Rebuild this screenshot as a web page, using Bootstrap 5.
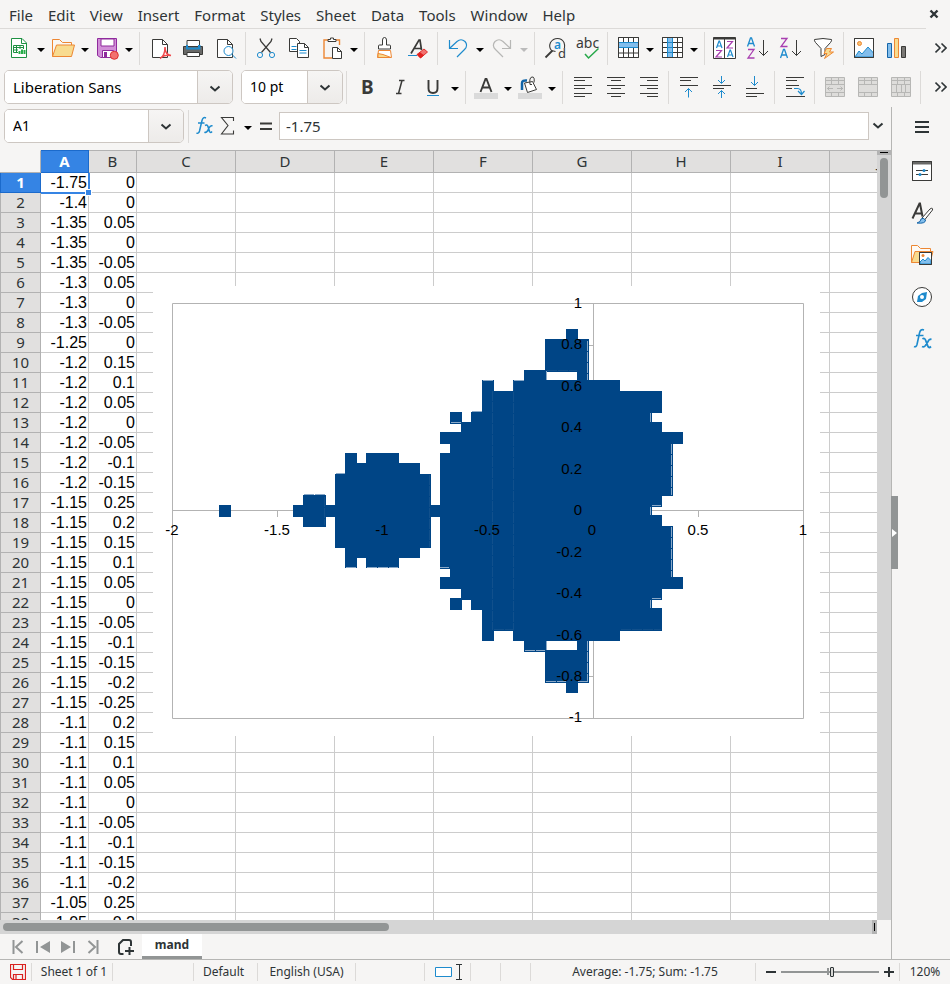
<!DOCTYPE html>
<html lang="en">
<head>
<meta charset="utf-8">
<meta name="viewport" content="width=device-width, initial-scale=1">
<title>mand - Spreadsheet</title>
<link href="https://cdn.jsdelivr.net/npm/bootstrap@5.3.0/dist/css/bootstrap.min.css" rel="stylesheet">
<style>
:root{--ui:#f6f5f4;--ink:#2e3436;--line:#b6b6b4;--soft:#dcdad8;--grid:#cccccc;--accent:#3584e4;--thumb:#929595}
body{font-family:"Noto Sans","Open Sans",sans-serif;font-size:14px;line-height:20px;color:var(--ink);background:var(--ui)}
button{color:inherit;font:inherit}
.menus{height:29px;padding-left:2px;gap:1px}
.menus::after{content:"";position:absolute;left:0;right:24px;bottom:0;border-bottom:1px solid var(--soft)}
.menus a{color:var(--ink);font-size:15px;padding:0 7px}
.tool-row{height:39px;padding-left:2px;padding-bottom:1px}
.tool{width:33px;height:34px;border:0;background:none;padding:0;display:flex;align-items:center;justify-content:center;flex:none}
.more{width:18px}
.drop{width:11px;height:34px;border:0;background:none;padding:0;flex:none;display:flex;align-items:center;justify-content:center}
.drop::after{content:"";border:4px solid transparent;border-top-color:#000;border-bottom:0;margin-top:3px}
.drop:disabled::after{border-top-color:#bbb}
.split{width:1px;height:33px;background:var(--soft);margin:0 3px;flex:none}
.drop+.split{margin-left:5px}
.ico{width:24px;height:24px;fill:none;stroke:#3a3a38;flex:none;overflow:visible}
.ico text{stroke:none;font-family:"Noto Sans",sans-serif}
.ico.undo{stroke:#1e8bcd}.ico.faded{stroke:#b7b7b5}
.combo{height:34px;border:1px solid #cdc7c2;border-radius:5px;overflow:hidden;background:#fff;flex:none;display:flex}
.combo input{border:0;padding:0 8px;min-width:0;flex:1;color:#000;outline:0}
.combo button{width:35px;border:0;border-left:1px solid #cdc7c2;background:linear-gradient(#f6f5f4,#edebe9);padding:0}
.w-font{width:229px;font-size:15px}.w-size{width:102px}.w-name{width:180px}
.formula-bar{height:43px;padding-left:4px;padding-bottom:5px}
.formula-bar .entry{height:28px;border:1px solid #cdc7c2;padding:0 6px;min-width:0;color:var(--ink);background:#fff;outline:0;font-size:15px}
.mini{border:0;background:none;padding:0;flex:none;height:30px;display:flex;align-items:center;justify-content:center}
.w-22{width:22px}.w-26{width:26px}.w-20{width:20px}
.grid-area{overflow:hidden;background:#fff}
.cells{table-layout:fixed;border-collapse:separate;border-spacing:0;width:929px}
.c-head{width:41px}.c-slim{width:48px}.c-wide{width:99px}
.cells th,.cells td{height:20px;line-height:19px;padding:0;border-right:1px solid var(--grid);border-bottom:1px solid var(--grid);white-space:nowrap}
.cells td{font-family:"Liberation Sans",Arial,sans-serif;font-size:16px;color:#000;text-align:right;padding-right:1px}
.cells th{background:#e1e0df;font-weight:400;font-size:15px;text-align:center;border-color:#b2b2b2}
.cells thead th{height:23px;line-height:21px;border-top:1px solid #b2b2b2}
.cells thead th:first-child{background:var(--ui);border-top-color:var(--ui)}
.cells tbody th{border-left:1px solid #b2b2b2}
.cells th.picked{background:var(--accent);color:#fff;font-weight:700;border-color:#1b6acb}
.cells td.cursor{position:relative}
.cells td.cursor::before{content:"";position:absolute;left:0;right:-2px;top:0;bottom:-2px;border:solid var(--accent);border-width:0 2px 2px 0}
.cells td.cursor::after{content:"";position:absolute;right:-4px;bottom:-4px;width:7px;height:7px;background:var(--accent);border:1px solid #fff}
.chart{position:absolute;left:153px;top:136px;width:667px;height:450px;background:#fff}
.chart text{font-family:"Liberation Sans",Arial,sans-serif;font-size:15px;fill:#000}
.vbar{width:14px;background:#d5d5d5}
.vbar .grip{height:5px;background:#b3b3b3}
.vbar .grip i{display:block;width:8px;height:1px;background:#000}
.vbar .thumb{width:8px;height:40px;border-radius:4px;background:var(--thumb);margin-top:3px}
.hbar{height:14px;background:#d5d5d5;margin-right:14px}
.hbar .thumb{width:44%;height:8px;border-radius:4px;background:var(--thumb);margin-left:3px}
.hbar .grip{width:5px;height:14px;background:#b3b3b3}
.hbar .grip i{display:block;width:1px;height:8px;background:#000}
.sheet-tabs{height:26px;border-bottom:1px solid var(--line);padding-left:5px}
.sheet-tabs .mini{width:25px;height:25px}
.sheet-tabs .tab{border:0;border-bottom:3px solid var(--thumb);background:#fff;width:60px;font-weight:700;font-size:12px;padding:0;line-height:22px}
.deck{width:59px;border-left:1px solid var(--line);border-bottom:1px solid var(--line);position:relative;padding:5px 0 0 1px}
.deck .mini{width:42px;height:30px}
.deck .stack{gap:12px;margin-top:14px}
.fold{position:absolute;left:-1px;top:389px;width:7px;height:73px;border:0;background:#929595;padding:0}
.fold::after{content:"";display:block;border:4px solid transparent;border-left:5px solid #fff;border-right:0;margin-left:1px}
.status{height:24px;font-size:12px;white-space:nowrap}
.status>div{height:18px;line-height:18px;border-right:1px solid var(--soft);flex:none;display:flex;align-items:center;justify-content:center}
.status>div:last-child{border:0}
.s-32{width:32px}.s-81{width:81px}.s-64{width:64px}.s-98{width:98px}.s-69{width:69px}.s-46{width:46px}.s-30{width:30px}.s-144{width:144px}.s-50{width:50px}
.zoomer{-webkit-appearance:none;appearance:none;width:98px;height:18px;background:linear-gradient(#929595,#929595) 46px 5px/2px 7px no-repeat,linear-gradient(#929595,#929595) center/100% 2px no-repeat;margin:0 5px}
.zoomer::-webkit-slider-thumb{-webkit-appearance:none;width:4px;height:10px;background:#d8d8d6;border:1px solid #2e3436;border-radius:1px}
</style>
<script src="https://cdn.jsdelivr.net/npm/bootstrap@5.3.0/dist/js/bootstrap.bundle.min.js"></script>
</head>
<body class="vh-100 d-flex flex-column overflow-hidden">

<nav class="menus d-flex align-items-center position-relative flex-shrink-0" aria-label="Menu bar">
  <a class="text-decoration-none" href="#">File</a><a class="text-decoration-none" href="#">Edit</a><a class="text-decoration-none" href="#">View</a><a class="text-decoration-none" href="#">Insert</a><a class="text-decoration-none" href="#">Format</a><a class="text-decoration-none" href="#">Styles</a><a class="text-decoration-none" href="#">Sheet</a><a class="text-decoration-none" href="#">Data</a><a class="text-decoration-none" href="#">Tools</a><a class="text-decoration-none" href="#">Window</a><a class="text-decoration-none" href="#">Help</a>
  <button class="mini ms-auto me-2" aria-label="Close"><svg width="16" height="16" viewBox="0 0 16 16" stroke="#2e3436" stroke-width="2.4"><path d="M4.500 3.500l7 7M11.500 3.500l-7 7"/></svg></button>
</nav>

<div class="tool-row d-flex align-items-center flex-shrink-0" role="toolbar" aria-label="Standard">
  <button class="tool" aria-label="New"><svg class="ico" viewBox="0 0 24 24"><path d="M4.500 2.500h10.500l4.500 4.500v14.500h-15z" fill="#fff" stroke="#1e9142"/><path d="M14.500 2.500v5h5" stroke="#1e9142"/><path d="M6.500 9.500h10v7h-10zM6.500 11.500h10M6.500 14h10M9.500 9.500v7M13 9.500v7" stroke="#1e9142"/><path d="M11 13h8v5h-8z" fill="#fff" stroke="none"/><path d="M12.500 18v-3M15 18v-4.500M17.500 18v-4" stroke="#27ae4a" stroke-width="2"/></svg></button><button class="drop" aria-label="New options"></button>
  <button class="tool" aria-label="Open"><svg class="ico" viewBox="0 0 24 24"><path d="M1.500 20.500v-17h7l3 3h9v4" fill="#faf7f3" stroke="#ed8733"/><path d="M1.500 20.500l4-11.500h18l-3 11.500z" fill="#f8db8f" stroke="#ed8733"/></svg></button><button class="drop" aria-label="Open options"></button>
  <button class="tool" aria-label="Save"><svg class="ico" viewBox="0 0 24 24"><path d="M2.500 2.500h19v19h-16l-3-2z" fill="#d28fd8" stroke="#8f2a9c"/><path d="M6 3h13v7h-13zM7.500 14.500h11v7h-11z" fill="#fff" stroke="#8f2a9c"/><path d="M9 16h3v5h-3z" fill="#8f2a9c" stroke="none"/><circle cx="19.300" cy="19.300" r="4" fill="#f2716f" stroke="#e0302f"/></svg></button><button class="drop" aria-label="Save options"></button>
  <div class="split"></div>
  <button class="tool" aria-label="Export as PDF"><svg class="ico" viewBox="0 0 24 24"><path d="M4.500 3.500h10l5 5v13h-15z" fill="#fff"/><path d="M14.500 3.500v5h5"/><path d="M12 22.500c3-1.500 5-6 5-11.500 0 5 2 8 6 8.500-5-1-8 .5-10 2" stroke="#f04a4c" stroke-width="1.500"/></svg></button>
  <button class="tool" aria-label="Print"><svg class="ico" viewBox="0 0 24 24"><path d="M6 10v-5.500h12.500v5.500" fill="#fff"/><path d="M2.500 10.500h19v8h-19z" fill="#696967"/><path d="M5 9h2v2.500h10v-2.500h2.500v4.500h-14.500z" fill="#1e8bcd" stroke="none"/><path d="M6 16.500h12.500v4h-12.500z" fill="#fff"/></svg></button>
  <button class="tool" aria-label="Print preview"><svg class="ico" viewBox="0 0 24 24"><path d="M3.500 3.500h10l5 5v13h-15z" fill="#fff"/><path d="M13.500 3.500v5h5"/><circle cx="14.500" cy="15" r="4.500" fill="#fff" stroke="#1e8bcd"/><path d="M18 18.500l4 4" stroke="#1e8bcd"/></svg></button>
  <div class="split"></div>
  <button class="tool" aria-label="Cut"><svg class="ico" viewBox="0 0 24 24"><path d="M6 2.500l1 3 9.500 11M18 2.500l-1 3-9.500 11" stroke-width="1.300"/><circle cx="6" cy="19" r="2.600" stroke="#1e8bcd"/><circle cx="18" cy="19" r="2.600" stroke="#1e8bcd"/></svg></button>
  <button class="tool" aria-label="Copy"><svg class="ico" viewBox="0 0 24 24"><path d="M2.500 2.500h7l3 3v10h-10z" fill="#fff"/><path d="M4.500 10.500h5M4.500 13.500h5" stroke="#1e8bcd"/><path d="M10.500 7.500h7l4 4v10h-11z" fill="#fff"/><path d="M17.500 7.500v4h4"/><path d="M12.500 14.500h7M12.500 17h7" stroke="#1e8bcd"/></svg></button>
  <button class="tool" aria-label="Paste"><svg class="ico" viewBox="0 0 24 24"><path d="M8 4h-4v18h8M16 4h3.500v5" stroke="#ed8733" stroke-width="1.400"/><path d="M8 5.500h8v-2h-2.500v-1.500h-3v1.500h-2.500z" fill="#fff"/><path d="M12.500 11.500h5l4 4v7h-9z" fill="#fff"/><path d="M17.500 11.500v4h4"/></svg></button><button class="drop" aria-label="Paste options"></button>
  <div class="split"></div>
  <button class="tool" aria-label="Clone formatting"><svg class="ico" viewBox="0 0 24 24"><path d="M5.500 13v-3q0-1 1-1h3v-5q0-2.500 2-2.500t2 2.500v5h3q1 0 1 1v3z" fill="#fff"/><path d="M5.500 14.500h12l1 7h-14z" fill="#fff" stroke="#ed8733"/><path d="M5 21.500v-4l5 1 8 3z" fill="#f8db8f" stroke="#ed8733"/></svg></button>
  <button class="tool" aria-label="Clear formatting"><svg class="ico" viewBox="0 0 24 24"><path d="M5 17.500l8-13.500h1l1.500 10M8 12.500h7" stroke-width="1.700"/><path d="M2 19.500h9" stroke="#1e8bcd"/><path d="M11 18.500l7-5.500 3.500 3-7 6z" fill="#f2716f" stroke="#e0302f"/><path d="M11 18.500l3-2.300 4 3-3.500 3z" fill="#e0201f" stroke="none"/></svg></button>
  <div class="split"></div>
  <button class="tool" aria-label="Undo"><svg class="ico undo" viewBox="0 0 24 24"><path d="M3.500 4v8.500h8.500M4 12l7-6.500q4-3.500 8 0 3.500 4-.5 8l-7.500 7.500" stroke-width="1.200"/></svg></button><button class="drop" aria-label="Undo list"></button>
  <button class="tool" disabled aria-label="Redo"><svg class="ico faded" viewBox="0 0 24 24"><path d="M20.500 4v8.500h-8.500M20 12l-7-6.500q-4-3.500-8 0-3.500 4 .5 8l7.500 7.500" stroke-width="1.200"/></svg></button><button class="drop" disabled aria-label="Redo list"></button>
  <div class="split"></div>
  <button class="tool" aria-label="Find and replace"><svg class="ico" viewBox="0 0 24 24"><path d="M8.500 14.500q-3-3.500-1-8 2.500-4 7-4t6.500 4q1 2.500.5 5.500M8.500 14.500l4 1" stroke-width="1.100"/><path d="M2.500 21.500l7-7" stroke-width="1.800"/><text x="11" y="13" font-size="12" fill="#1e8bcd" font-weight="600">a</text><text x="15" y="22" font-size="13" fill="#3a3a38">d</text></svg></button>
  <button class="tool" aria-label="Spelling"><svg class="ico" viewBox="0 0 24 24"><text x="0" y="12" font-size="14" fill="#3a3a38">abc</text><path d="M9 18l3.500 4 10-9.500" stroke="#27a84a" stroke-width="1.500"/></svg></button>
  <div class="split"></div>
  <button class="tool" aria-label="Row"><svg class="ico" viewBox="0 0 24 24"><path d="M2.500 1.500h20v20h-20z" fill="#fff"/><path d="M2.500 17h20M7.500 1.500v20M12.500 1.500v20M17.500 1.500v20"/><path d="M2.500 6.500h20v5h-20z" fill="#83beec" stroke="#1e8bcd"/><path d="M2.500 1.500h20v20h-20z"/></svg></button><button class="drop" aria-label="Row options"></button>
  <button class="tool" aria-label="Column"><svg class="ico" viewBox="0 0 24 24"><path d="M2.500 1.500h20v20h-20z" fill="#fff"/><path d="M17.500 1.500v20M2.500 6.500h20M2.500 11.500h20M2.500 16.500h20"/><path d="M7.500 1.500h5v20h-5z" fill="#83beec" stroke="#1e8bcd"/><path d="M7.500 6.500h5M7.500 11.500h5M7.500 16.500h5" stroke="#1e8bcd"/><path d="M2.500 1.500h20v20h-20z"/></svg></button><button class="drop" aria-label="Column options"></button>
  <div class="split"></div>
  <button class="tool" aria-label="Sort"><svg class="ico" viewBox="0 0 24 24"><path d="M.5 1.500h22v21h-22z" fill="#fff"/><path d="M.5 2.500h22" stroke-width="2"/><path d="M11.500 3v19"/><path d="M3.500 12l2.500-7h.5l2.500 7M4.500 10h4M14.500 21l2.500-7h.5l2.500 7M15.500 19h4" stroke="#1e8bcd" stroke-width="1.200"/><path d="M14 5.500h5.500l-5.500 6.500h6M3 14.500h5.500l-5.500 6.500h6" stroke="#a83fb0" stroke-width="1.200"/></svg></button>
  <button class="tool" aria-label="Sort ascending"><svg class="ico" viewBox="0 0 24 24"><path d="M1.500 10.500l3-8.500h1l3 8.500M2.500 7.500h5" stroke="#1e8bcd" stroke-width="1.300"/><path d="M2 13.500h6l-6 8.500h6.500" stroke="#a83fb0" stroke-width="1.300"/><path d="M17.500 4v15.500M13 15l4.500 4.500 4.500-4.500"/></svg></button>
  <button class="tool" aria-label="Sort descending"><svg class="ico" viewBox="0 0 24 24"><path d="M2 2.500h6l-6 8h6.500" stroke="#a83fb0" stroke-width="1.300"/><path d="M1.500 22l3-8.500h1l3 8.500M2.500 19h5" stroke="#1e8bcd" stroke-width="1.300"/><path d="M17.500 4v15.500M13 15l4.500 4.500 4.500-4.500"/></svg></button>
  <button class="tool" aria-label="AutoFilter"><svg class="ico" viewBox="0 0 24 24"><path d="M2.500 3.500q8.500-2 17 0 .5 1-1 3l-5.500 6v6l-4 2v-8l-5.500-6q-1.500-2-1-3z" fill="#fff"/><path d="M14.500 12.500h5l-2 3.500h4l-9 6.500 2.500-5h-3z" fill="#f8db8f" stroke="#ed8733"/></svg></button>
  <div class="split"></div>
  <button class="tool" aria-label="Insert image"><svg class="ico" viewBox="0 0 24 24"><path d="M2.500 2.500h19v19h-19z" fill="#fff"/><circle cx="7.500" cy="7.500" r="2" fill="#f8c26f" stroke="#ed8733"/><path d="M3 21l4-6 3 3 6-7 5.500 6v4z" fill="#83beec" stroke="#1e8bcd"/><path d="M2.500 2.500h19v19h-19z"/></svg></button>
  <button class="tool" aria-label="Insert chart"><svg class="ico" viewBox="0 0 24 24"><path d="M2.500 7.500h4v14h-4z" fill="#83beec" stroke="#1565a8"/><path d="M9.500 2.500h4v19h-4z" fill="#f8db8f" stroke="#ed8733"/><path d="M16.500 10.500h4v11h-4z" fill="#797774"/></svg></button>
  <button class="tool more ms-auto" aria-label="More tools"><svg width="12" height="12" viewBox="0 0 12 12" fill="none" stroke="#2e3436" stroke-width="1.600"><path d="M.5 1.500l4.500 4.500-4.500 4.500M6.500 1.500l4.500 4.500-4.500 4.500"/></svg></button>
</div>

<div class="tool-row d-flex align-items-center flex-shrink-0 ps-1" role="toolbar" aria-label="Formatting">
  <div class="combo w-font"><input aria-label="Font name" value="Liberation Sans"><button aria-label="Font list"><svg width="12" height="8" viewBox="0 0 12 8" fill="none" stroke="#2e3436" stroke-width="2"><path d="M1.500 1.500l4.500 4 4.500-4"/></svg></button></div>
  <div class="combo w-size ms-2"><input aria-label="Font size" value="10 pt"><button aria-label="Size list"><svg width="12" height="8" viewBox="0 0 12 8" fill="none" stroke="#2e3436" stroke-width="2"><path d="M1.500 1.500l4.500 4 4.500-4"/></svg></button></div>
  <div class="split"></div>
  <button class="tool" aria-label="Bold"><svg class="ico" viewBox="0 0 24 24"><text x="6" y="19" font-size="19" font-weight="700" fill="#3a3a38">B</text></svg></button>
  <button class="tool" aria-label="Italic"><svg class="ico" viewBox="0 0 24 24"><path d="M11 5.500h5.500M8 18.500h5.500M14 5.500l-3.500 13" stroke-width="1.500"/></svg></button>
  <button class="tool" aria-label="Underline"><svg class="ico" viewBox="0 0 24 24"><path d="M7.500 5v8.500q0 4.500 4.500 4.500t4.500-4.500v-8.500" stroke-width="1.900"/><path d="M6 20.500h12" stroke="#1e8bcd"/></svg></button><button class="drop" aria-label="Underline styles"></button>
  <div class="split"></div>
  <button class="tool" aria-label="Font color"><svg class="ico" viewBox="0 0 24 24"><path d="M0 18h24v6h-24z" fill="#dadada" stroke="none"/><path d="M6.500 17l5-13h1l5 13M8.500 12.500h7" stroke-width="1.900"/></svg></button><button class="drop" aria-label="Font colors"></button>
  <button class="tool" aria-label="Background color"><svg class="ico" viewBox="0 0 24 24"><path d="M0 18h24v6h-24z" fill="#dadada" stroke="none"/><path d="M4 15v-7q0-3 5-2.500" stroke="#0f64a8" stroke-width="2.500"/><path d="M6.500 8l8-1.500 4 8-9 3z" fill="#fff"/><path d="M12 9.500q-1-7 2-7.500t2 5.500M12 9.500h2"/></svg></button><button class="drop" aria-label="Background colors"></button>
  <div class="split"></div>
  <button class="tool" aria-label="Align left"><svg class="ico" viewBox="0 0 24 24"><path d="M3 2.500h18M3 5.500h11M3 10.500h18M3 13.500h11M3 18.500h18M3 21.500h11"/></svg></button>
  <button class="tool" aria-label="Align center"><svg class="ico" viewBox="0 0 24 24"><path d="M3 2.500h18M7 5.500h10M3 10.500h18M7 13.500h10M3 18.500h18M7 21.500h10"/></svg></button>
  <button class="tool" aria-label="Align right"><svg class="ico" viewBox="0 0 24 24"><path d="M3 2.500h18M10 5.500h11M3 10.500h18M10 13.500h11M3 18.500h18M10 21.500h11"/></svg></button>
  <div class="split"></div>
  <button class="tool" aria-label="Align top"><svg class="ico" viewBox="0 0 24 24"><path d="M3 2.500h18M3 5.500h11M3 10.500h18"/><path d="M11.500 22.500v-9M8 17l3.500-3.500 3.500 3.500" stroke="#1e8bcd"/></svg></button>
  <button class="tool" aria-label="Center vertically"><svg class="ico" viewBox="0 0 24 24"><path d="M3 10.500h18M3 13.500h11"/><path d="M11.500 1v7M8 5l3.500 3.500 3.500-3.500M11.500 23v-7.500M8 19l3.500-3.500 3.500 3.500" stroke="#1e8bcd"/></svg></button>
  <button class="tool" aria-label="Align bottom"><svg class="ico" viewBox="0 0 24 24"><path d="M3 13.500h11M3 18.500h18M3 21.500h11"/><path d="M11.500 1v9.500M8 7l3.500 3.500 3.500-3.500" stroke="#1e8bcd"/></svg></button>
  <div class="split"></div>
  <button class="tool" aria-label="Wrap text"><svg class="ico" viewBox="0 0 24 24"><path d="M3 2.500h18M3 5.500h11M3 10.500h13M3 13.500h6M3 21.500h19"/><path d="M11 13.500h3.500q4 0 4 5.500M15 16l3.500 3.500 3-3.500" stroke="#1e8bcd" stroke-width="1.200"/></svg></button>
  <div class="split"></div>
  <button class="tool" disabled aria-label="Merge and center"><svg class="ico faded" viewBox="0 0 24 24"><path d="M2.500 2.500h19v19h-19z" fill="#dedddb"/><path d="M2.500 5.500h19M2.500 9.500h19M2.500 17.500h19M8.500 2.500v7M15.500 2.500v7M8.500 17.500v4M15.500 17.500v4M4 13.500h6M14 13.500h6M6.500 11.500l-2 2 2 2M17.500 11.500l2 2-2 2"/></svg></button>
  <button class="tool" disabled aria-label="Merge cells"><svg class="ico faded" viewBox="0 0 24 24"><path d="M2.500 2.500h19v19h-19z" fill="#dedddb"/><path d="M2.500 5.500h19M2.500 9.500h19M2.500 17.500h19M8.500 2.500v7M15.500 2.500v7M8.500 17.500v4M15.500 17.500v4"/></svg></button>
  <button class="tool" disabled aria-label="Split cells"><svg class="ico faded" viewBox="0 0 24 24"><path d="M2.500 2.500h19v19h-19z" fill="#dedddb"/><path d="M2.500 5.500h19M2.500 9.500h19M2.500 17.500h19M8.500 2.500v7M15.500 2.500v7M7.500 9.500v8M12.500 9.500v8M16.500 9.500v8M8.500 17.500v4M15.500 17.500v4"/></svg></button>
  <div class="split"></div>
  <button class="tool more ms-auto" aria-label="More formatting"><svg width="12" height="12" viewBox="0 0 12 12" fill="none" stroke="#2e3436" stroke-width="1.600"><path d="M.5 1.500l4.500 4.500-4.500 4.500M6.500 1.500l4.500 4.500-4.500 4.500"/></svg></button>
</div>

<div class="d-flex flex-grow-1 overflow-hidden">
  <main class="d-flex flex-column flex-grow-1 overflow-hidden">
    <div class="formula-bar d-flex align-items-center flex-shrink-0">
      <div class="combo w-name"><input aria-label="Name box" value="A1"><button aria-label="Name list"><svg width="12" height="8" viewBox="0 0 12 8" fill="none" stroke="#2e3436" stroke-width="2"><path d="M1.500 1.500l4.500 4 4.500-4"/></svg></button></div>
      <div class="split ms-1"></div>
      <button class="mini w-26" aria-label="Function wizard"><svg class="ico" viewBox="0 0 24 24"><path d="M13 4q-3-1.500-4 2.500l-2.500 10.500q-.8 3-3 2M5 9h6.500" stroke="#1e8bcd" stroke-width="1.500"/><path d="M12 11.500q2-1.500 3 1l1.500 5q1 2 2.500 0M19.500 12q-2-1-3.500 2l-1.500 3q-1.500 2-3 1" stroke="#1e8bcd" stroke-width="1.600"/></svg></button>
      <button class="mini w-20" aria-label="Select function"><svg class="ico" viewBox="0 0 24 24"><path d="M17.500 7v-3.500h-12l6.500 8-6.500 8.500h12v-3.500" stroke-width="1.100"/></svg></button>
      <button class="drop ms-1" aria-label="Functions"></button>
      <button class="mini w-26" aria-label="Formula"><svg class="ico" viewBox="0 0 24 24"><path d="M6 9.500h12M6 15h12" stroke-width="2"/></svg></button>
      <input class="entry flex-grow-1" aria-label="Input line" value="-1.75">
      <button class="mini w-22 pe-1" aria-label="Expand formula bar"><svg width="12" height="8" viewBox="0 0 12 8" fill="none" stroke="#2e3436" stroke-width="2"><path d="M1.500 1.500l4.500 4 4.500-4"/></svg></button>
    </div>

    <div class="d-flex flex-grow-1 overflow-hidden">
      <div class="grid-area flex-grow-1 position-relative">
        <table class="cells">
          <colgroup><col class="c-head"><col span="2" class="c-slim"><col span="8" class="c-wide"></colgroup>
          <thead><tr><th></th><th class="picked">A</th><th>B</th><th>C</th><th>D</th><th>E</th><th>F</th><th>G</th><th>H</th><th>I</th><th>J</th></tr></thead>
          <tbody id="rows"></tbody>
        </table>
        <svg class="chart" viewBox="153 286 667 450" role="img" aria-label="Scatter chart">
          <g fill="none" stroke="#b3b3b3">
            <path d="M172.500 303.500h631v415h-631zM172.500 510.500h631M593.500 303.500v415"/>
            <path d="M277.500 510v7M698.500 510v7M803.500 510v7M588 345.500h5M588 676.500h5"/>
          </g>
          <g fill="#004586">
            <path d="M219 505h12v12h-12zM450 412h12v12h-12zM450 598h12v12h-12z"/>
            <path d="M293 505h10v-10h23v10h9v-31h10v-21h12v10h9v-10h33v10h21v11h11v31h9v-52h10v-9h-10v-12h21v-10h10v-10h11v-32h12v11h19v-11h11v-10h21v-31h21v-10h12v10h11v41h31v11h42v22h-10v9h10v10h21v12h-10v52h-11v11h-10v8h10v11h11v51h10v12h-21v11h-10v8h10v23h-42v10h-31v42h-11v10h-12v-10h-21v-31h-21v-11h-11v-10h-19v10h-12v-31h-11v-10h-10v-11h-21v-12h10v-8h-10v-52h-9v31h-11v10h-21v10h-33v-10h-9v10h-12v-20h-10v-31h-9v10h-23v-10h-10z"/>
          </g>
          <path d="M547 372h30v8h-30zM547 641h30v9h-30z" fill="#fff"/>
          <g fill="none" stroke="#8aa9c8" stroke-dasharray="10 1">
            <path d="M587.500 341v39M587.500 641v41M671.500 444v51M671.500 527v50M546.500 371v9M546.500 641v9M650.500 413v9M650.500 507v8M650.500 600v8M652 505.500h9M652 598.500h9M525 650.500h20M546 681.500h20M578 681.500h10M451 422.500h10M304 494.500h21M336 473.500h9M483 380.500h10M514 380.500h10M472 411.500h10M346 567.500h10M367 567.500h31M440 567.500h9"/>
          </g>
          <path d="M492.500 391v239M513.500 381v249M324.500 497v28M429.500 475v72M621 629.500h40M494 629.500h19M547 370.500h30" stroke="#2a6197" stroke-dasharray="10 1" fill="none" opacity=".4"/>
          <g text-anchor="end">
            <text x="582" y="308">1</text><text x="582" y="349">0.8</text><text x="582" y="391">0.6</text><text x="582" y="432">0.4</text><text x="582" y="474">0.2</text><text x="582" y="515">0</text><text x="582" y="557">-0.2</text><text x="582" y="598">-0.4</text><text x="582" y="640">-0.6</text><text x="582" y="681">-0.8</text><text x="582" y="722">-1</text>
          </g>
          <g text-anchor="middle">
            <text x="172" y="535">-2</text><text x="277" y="535">-1.5</text><text x="382" y="535">-1</text><text x="487" y="535">-0.5</text><text x="592" y="535">0</text><text x="698" y="535">0.5</text><text x="803" y="535">1</text>
          </g>
        </svg>
      </div>
      <div class="vbar flex-shrink-0 d-flex flex-column align-items-center"><div class="grip w-100 d-flex align-items-center justify-content-center"><i></i></div><div class="thumb"></div></div>
    </div>
    <div class="hbar d-flex align-items-center flex-shrink-0"><div class="thumb"></div><div class="grip ms-auto d-flex align-items-center justify-content-center"><i></i></div></div>

    <div class="sheet-tabs d-flex flex-shrink-0">
      <button class="mini" aria-label="First sheet"><svg width="16" height="16" viewBox="0 0 16 16" fill="none" stroke="#929595" stroke-width="2"><path d="M3.500 1v14M12.500 2l-6.500 6 6.500 6"/></svg></button>
      <button class="mini" aria-label="Previous sheet"><svg width="16" height="16" viewBox="0 0 16 16" fill="#929595"><path d="M1 2h2v12h-2zM15 2v12l-10-6z"/></svg></button>
      <button class="mini" aria-label="Next sheet"><svg width="16" height="16" viewBox="0 0 16 16" fill="#929595"><path d="M13 2h2v12h-2zM1 2v12l10-6z"/></svg></button>
      <button class="mini" aria-label="Last sheet"><svg width="16" height="16" viewBox="0 0 16 16" fill="none" stroke="#929595" stroke-width="2"><path d="M12.500 1v14M3.500 2l6.500 6-6.500 6"/></svg></button>
      <button class="mini ms-2" aria-label="Add sheet"><svg width="16" height="16" viewBox="0 0 16 16" fill="none" stroke="#2e3436" stroke-width="2"><path d="M5.500 15h-2.500q-2 0-2-2v-8l4-4h6q2 0 2 2v4M11.500 8v8M7 12h9"/></svg></button>
      <button class="tab ms-1">mand</button>
    </div>
  </main>

  <aside class="deck flex-shrink-0">
    <button class="mini ms-2" aria-label="Sidebar settings"><svg width="14" height="12" viewBox="0 0 14 12" fill="#2e3436"><path d="M0 0h14v2h-14zM0 5h14v2h-14zM0 10h14v2h-14z"/></svg></button>
    <div class="stack d-flex flex-column ms-2">
      <button class="mini" aria-label="Properties"><svg class="ico" viewBox="0 0 24 24"><path d="M2.500 2.500h19v19h-19z" fill="#fff"/><path d="M3 4h18" stroke="#696967" stroke-width="3"/><path d="M2.500 2.500h19v19h-19z"/><path d="M6 11.500h12M6 15.500h12"/><circle cx="14" cy="11.500" r="1.500" fill="#1e8bcd" stroke="none"/><circle cx="10" cy="15.500" r="1.500" fill="#1e8bcd" stroke="none"/></svg></button>
      <button class="mini" aria-label="Styles"><svg class="ico" viewBox="0 0 24 24"><path d="M2.500 17.500l7-15h.5l2.500 13M5 12.500h7" stroke-width="2"/><path d="M12 17l8-9q3-2 2.500 1l-8 10z" fill="#fff"/><path d="M7 22q4-1 4-4 2-2 4.500 1 0 4-8.500 3z" fill="#83beec" stroke="#1565a8"/></svg></button>
      <button class="mini" aria-label="Gallery"><svg class="ico" viewBox="0 0 24 24"><path d="M1.500 19.500v-17h6l3 3h10v4" fill="#fdfaf5" stroke="#ed8733"/><path d="M1.500 19.500l3.500-11h18l-3 11z" fill="#f8db8f" stroke="#ed8733"/><path d="M9.500 9.500h12v12h-12z" fill="#fff"/><circle cx="13" cy="12.500" r="1.500" fill="#ed8733" stroke="none"/><path d="M10 21v-2l3-3 2 2 3-3.500 3 3v3.500z" fill="#83beec" stroke="#1e8bcd"/><path d="M9.500 9.500h12v12h-12z"/></svg></button>
      <button class="mini" aria-label="Navigator"><svg class="ico" viewBox="0 0 24 24"><circle cx="12" cy="12" r="9.500" fill="#fff"/><path d="M17 7l-1 7-4 3-5 0 1-6 4-3z" fill="#1e8bcd" stroke="none"/><circle cx="12" cy="12" r="2" fill="#fff" stroke="none"/></svg></button>
      <button class="mini" aria-label="Functions"><svg class="ico" viewBox="0 0 24 24"><path d="M14 3q-3.500-1.500-4.500 3l-2.500 11.500q-.8 3-3 2M6 8.500h7.500" stroke="#1e8bcd" stroke-width="1.600"/><path d="M12.500 12q2-1.500 3 1l2.500 6.500q1 2 3 0M21.500 12.500q-2-1-3.500 2l-2.500 4q-1.500 2-3.500 1" stroke="#1e8bcd" stroke-width="1.800"/></svg></button>
    </div>
    <button class="fold" aria-label="Hide sidebar"></button>
  </aside>
</div>

<footer class="status d-flex align-items-center flex-shrink-0">
  <div class="s-32 ps-1"><svg width="16" height="16" viewBox="0 0 16 16" fill="none" stroke="#d9221f"><path d="M.5.5h15v15h-13l-2-2zM3.500.5v5h9v-5M3.500 15.500v-5h9v5M6 11v4" stroke-width="1.200"/></svg></div>
  <div class="s-81 ps-1">Sheet 1 of 1</div><div class="s-81"></div><div class="s-64 pe-1">Default</div><div class="s-98">English (USA)</div><div class="s-69"></div>
  <div class="s-46"><svg width="28" height="16" viewBox="0 0 28 16" fill="none"><path d="M1.500 3.500h16v9h-16z" stroke="#1e8bcd" fill="#fff"/><path d="M22 .5h7M22 15.500h7M25.500 1v14" stroke="#2e3436"/></svg></div>
  <div class="s-30"></div><div class="s-30"></div>
  <div class="flex-grow-1 ps-1">Average: -1.75; Sum: -1.75</div>
  <div class="s-144 ps-1"><svg width="10" height="10" viewBox="0 0 10 10"><path d="M0 4h10v2h-10z" fill="#2e3436"/></svg><input class="zoomer" type="range" min="0" max="100" value="53" aria-label="Zoom"><svg width="10" height="10" viewBox="0 0 10 10"><path d="M0 4h10v2h-10zM4 0h2v10h-2z" fill="#2e3436"/></svg></div>
  <div class="s-50">120%</div>
</footer>

<script>
const runs = [
  [-1.75, [0]], [-1.4, [0]], [-1.35, [0.05, 0, -0.05]], [-1.3, [0.05, 0, -0.05]], [-1.25, [0]],
  [-1.2, [0.15, 0.1, 0.05, 0, -0.05, -0.1, -0.15]],
  [-1.15, [0.25, 0.2, 0.15, 0.1, 0.05, 0, -0.05, -0.1, -0.15, -0.2, -0.25]],
  [-1.1, [0.2, 0.15, 0.1, 0.05, 0, -0.05, -0.1, -0.15, -0.2]],
  [-1.05, [0.25, 0.2]]
];
let n = 0;
document.getElementById("rows").innerHTML = runs.flatMap(([a, list]) => list.map(b => {
  n++;
  const first = n === 1;
  return `<tr><th${first ? ' class="picked"' : ""}>${n}</th><td${first ? ' class="cursor"' : ""}>${a}</td><td>${b}</td>${"<td></td>".repeat(8)}</tr>`;
})).join("");
</script>
</body>
</html>
